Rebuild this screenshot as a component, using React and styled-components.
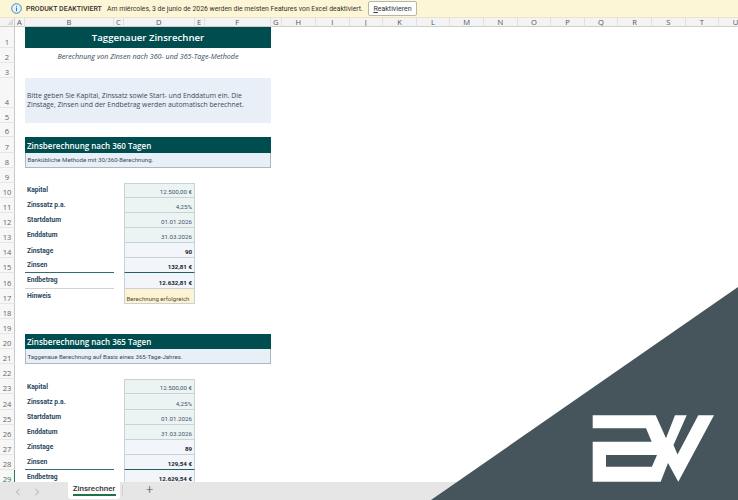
import React from "react";
import styled, { createGlobalStyle } from "styled-components";

const Global = createGlobalStyle`
  html, body { margin: 0; padding: 0; background: #fff; }
  body { font-family: Roboto, "Noto Sans", sans-serif; }
`;

const Window = styled.div`
  position: relative;
  width: 738px;
  height: 500px;
  display: flex;
  flex-direction: column;
  overflow: hidden;
  background: #fff;
`;

const InfoBar = styled.div`
  flex: none;
  height: 18px;
  box-sizing: border-box;
  padding-left: 11px;
  display: flex;
  align-items: center;
  background: #fdf6d6;
  border-bottom: 1px solid #e9e5cf;
  color: #33332f;
  white-space: nowrap;
`;
const InfoIcon = styled.svg`
  width: 11px;
  height: 11px;
  margin-right: 4px;
  flex: none;
`;
const InfoTitle = styled.span`
  flex: none;
  width: 81px;
  font-weight: 500;
  font-size: 7px;
`;
const InfoMessage = styled.span`
  flex: none;
  width: 255px;
  font-size: 6.85px;
`;
const ReactivateButton = styled.button`
  flex: none;
  margin-left: 6px;
  width: 49px;
  height: 15px;
  padding: 0;
  background: #fff;
  border: 1px solid #b9b7a8;
  border-radius: 2px;
  color: #33332f;
  font: 400 7px Roboto, sans-serif;
  u { text-underline-offset: 1px; }
`;

const Sheet = styled.div`
  flex: 1;
  min-height: 0;
  overflow: hidden;
  display: grid;
  grid-template-columns: 15px 10px 89px 10px 70.5px 10px 66.5px 10.5px 34.5px repeat(13, 33.6px) 20px;
  grid-template-rows: 9px 21.3px 15px 14.6px 30px 15px 14.6px repeat(11, 15.12px) 15.1px 15.1px 15.2px 15.1px 15.1px repeat(7, 15.15px);
  align-content: start;
  font-family: "Open Sans", "Noto Sans", sans-serif;
`;

const Corner = styled.div`
  grid-column: 1;
  grid-row: 1;
  position: relative;
  background: #f3f3f3;
  border-right: 1px solid #cfcfcf;
  border-bottom: 1px solid #cfcfcf;
  &::after {
    content: "";
    position: absolute;
    right: 1px;
    bottom: 1px;
    border-left: 6px solid transparent;
    border-bottom: 6px solid #dadada;
  }
`;
const ColHead = styled.div`
  grid-row: 1;
  background: #f3f3f3;
  border-right: 1px solid #e0e0e0;
  border-bottom: 1px solid #cfcfcf;
  color: #555;
  font-size: 7.6px;
  line-height: 8px;
  text-align: center;
  box-sizing: border-box;
  overflow: hidden;
`;
const RowHead = styled.div`
  grid-column: 1;
  background: #f7f7f7;
  border-right: 1px solid ${(p) => (p.$active ? "#2e7d52" : "#c9c9c9")};
  border-bottom: 1px solid #e6e6e6;
  color: ${(p) => (p.$active ? "#2e7d52" : "#666")};
  font-size: 7.6px;
  line-height: 9px;
  display: flex;
  align-items: flex-end;
  justify-content: center;
  box-sizing: border-box;
`;

const Title = styled.div`
  grid-column: 3 / 8;
  background: #004d50;
  color: #fff;
  font-size: 9.6px;
  font-weight: 600;
  display: flex;
  align-items: center;
  justify-content: center;
`;
const Subtitle = styled.div`
  grid-column: 3 / 8;
  color: #34495a;
  font-size: 7.14px;
  font-style: italic;
  display: flex;
  align-items: center;
  justify-content: center;
  white-space: nowrap;
`;
const Intro = styled.div`
  grid-column: 3 / 8;
  background: #e9eff6;
  color: #3b4b58;
  font-size: 6.85px;
  line-height: 9px;
  padding-left: 2px;
  display: flex;
  align-items: center;
  white-space: nowrap;
`;
const SectionHead = styled.div`
  grid-column: 3 / 8;
  background: #004d50;
  color: #fff;
  font-size: 8px;
  font-weight: 600;
  padding-left: 2px;
  display: flex;
  align-items: center;
  white-space: nowrap;
`;
const SectionNote = styled.div`
  grid-column: 3 / 8;
  background: #e9eff6;
  border: 1px solid #a9b9c4;
  border-top: none;
  box-sizing: border-box;
  color: #3a4c5c;
  font-family: Roboto, sans-serif;
  font-size: 6.1px;
  padding-left: 1.5px;
  display: flex;
  align-items: center;
  white-space: nowrap;
`;
const Label = styled.div`
  grid-column: 3;
  color: #2a4660;
  font-family: Roboto, sans-serif;
  font-size: 6.7px;
  font-weight: 700;
  padding: 0 0 0.5px 2px;
  display: flex;
  align-items: center;
  white-space: nowrap;
  box-sizing: border-box;
  border-bottom: ${(p) => (p.$rule === "thick" ? "1.5px solid #2f6d73" : p.$rule === "thin" ? "1px solid #cfd3d6" : "none")};
`;
const Value = styled.div`
  grid-column: 5;
  box-sizing: border-box;
  background: ${(p) => (p.$kind === "input" ? "#ecf3f3" : p.$kind === "note" ? "#fdf2d2" : "#f2f6fa")};
  border-left: 1px solid #c6d4d8;
  border-right: 1px solid #c6d4d8;
  border-top: ${(p) => (p.$first ? "1px solid #c6d4d8" : "none")};
  border-bottom: ${(p) => (p.$rule ? "1.5px solid #245e66" : "1px solid #c6d4d8")};
  color: ${(p) => (p.$kind === "input" ? "#42566a" : p.$kind === "note" ? "#544f33" : "#17212b")};
  font-family: Roboto, sans-serif;
  font-size: ${(p) => (p.$kind === "note" ? "6.1px" : "6.2px")};
  font-weight: ${(p) => (p.$kind === "calc" ? 700 : 400)};
  line-height: 9px;
  display: flex;
  align-items: flex-end;
  justify-content: ${(p) => (p.$kind === "note" ? "flex-start" : "flex-end")};
  padding: 0 1.5px 0;
  white-space: nowrap;
`;

const TabBar = styled.div`
  flex: none;
  height: 18.5px;
  display: flex;
  align-items: flex-start;
  background: #e6e6e6;
  color: #333;
`;
const Chevron = styled.svg`
  flex: none;
  width: 6px;
  height: 8px;
  margin-top: 6px;
  margin-left: ${(p) => p.$left}px;
`;
const Tab = styled.div`
  flex: none;
  width: 52px;
  height: 17px;
  margin-left: 28px;
  padding-top: 1.5px;
  background: #fff;
  border-radius: 0 0 3px 3px;
  display: flex;
  flex-direction: column;
  align-items: center;
  font-size: 8px;
  font-weight: 500;
  font-family: Roboto, sans-serif;
  line-height: 11px;
  box-sizing: border-box;
`;
const TabLine = styled.span`
  display: block;
  width: 43px;
  height: 1.5px;
  background: #217346;
`;
const TabDivider = styled.div`
  flex: none;
  width: 1px;
  height: 11px;
  margin: 3px 0 0 2px;
  background: #d0d0d0;
`;
const AddTab = styled.div`
  flex: none;
  margin-left: 23px;
  font-size: 13px;
  line-height: 16px;
  color: #555;
  font-weight: 300;
`;

const Banner = styled.svg`
  position: absolute;
  right: 0;
  bottom: 0;
  width: 307px;
  height: 213px;
`;

const columns = [
  ["A", 2], ["B", 3], ["C", 4], ["D", 5], ["E", 6], ["F", 7], ["G", 8], ["H", 9],
  ...["I", "J", "K", "L", "M", "N", "O", "P", "Q", "R", "S", "T"].map((c, i) => [c, 10 + i]),
  ["U", 22],
];

const rowNumbers = Array.from({ length: 29 }, (_, i) => i + 1);

const block = (first, zinstage, zinsen, endbetrag) => {
  const r = (n) => ({ gridRow: first + n + 1 });
  return [
    { label: "Kapital", value: "12.500,00 €", kind: "input", row: r(0), first: true },
    { label: "Zinssatz p.a.", value: "4,25%", kind: "input", row: r(1) },
    { label: "Startdatum", value: "01.01.2026", kind: "input", row: r(2) },
    { label: "Enddatum", value: "31.03.2026", kind: "input", row: r(3) },
    { label: "Zinstage", value: zinstage, kind: "calc", row: r(4) },
    { label: "Zinsen", value: zinsen, kind: "calc", row: r(5), rule: "thick" },
    { label: "Endbetrag", value: endbetrag, kind: "calc", row: r(6), rule: "thin" },
  ];
};

const rowsA = [
  ...block(10, "90", "132,81 €", "12.632,81 €"),
  { label: "Hinweis", value: "Berechnung erfolgreich", kind: "note", row: { gridRow: 18 } },
];
const rowsB = block(23, "89", "129,54 €", "12.629,54 €");

const Block = ({ rows }) =>
  rows.map((r) => (
    <React.Fragment key={r.label + r.row.gridRow}>
      <Label style={r.row} $rule={r.rule}>{r.label}</Label>
      <Value style={r.row} $kind={r.kind} $first={r.first} $rule={r.rule === "thick"}>{r.value}</Value>
    </React.Fragment>
  ));

const LOGO =
  "M592.7 415.3 L655.7 415.3 L666 438.3 L675 415.3 L686.7 415.3 L673.5 445 L677.5 454.5 L698.3 415.3 L714 415.3 L678.3 481.7 L668 463 L660.7 481.7 L592.7 481.7 L592.7 441.7 L651.7 441.7 L646 428.3 L592.7 428.3 Z M606 455 L657 455 L651.9 466.7 L606 466.7 Z";

export default function App() {
  return (
    <Window>
      <Global />
      <InfoBar>
        <InfoIcon viewBox="0 0 11 11">
          <circle cx="5.5" cy="5.5" r="4.8" fill="#e8f1f8" stroke="#2f7fb8" strokeWidth="0.9" />
          <rect x="5" y="4.6" width="1" height="3.6" fill="#2f7fb8" />
          <rect x="5" y="2.8" width="1" height="1" fill="#2f7fb8" />
        </InfoIcon>
        <InfoTitle>PRODUKT DEAKTIVIERT</InfoTitle>
        <InfoMessage>Am miércoles, 3 de junio de 2026 werden die meisten Features von Excel deaktiviert.</InfoMessage>
        <ReactivateButton><u>R</u>eaktivieren</ReactivateButton>
      </InfoBar>
      <Sheet>
        <Corner />
        {columns.map(([c, col]) => (
          <ColHead key={c} style={{ gridColumn: col }}>{c}</ColHead>
        ))}
        {rowNumbers.map((n) => (
          <RowHead key={n} style={{ gridRow: n + 1 }} $active={n === 29}>{n}</RowHead>
        ))}
        <Title style={{ gridRow: 2 }}>Taggenauer Zinsrechner</Title>
        <Subtitle style={{ gridRow: 3 }}>Berechnung von Zinsen nach 360- und 365-Tage-Methode</Subtitle>
        <Intro style={{ gridRow: "5 / 7" }}>
          <span>
            Bitte geben Sie Kapital, Zinssatz sowie Start- und Enddatum ein. Die
            <br />
            Zinstage, Zinsen und der Endbetrag werden automatisch berechnet.
          </span>
        </Intro>
        <SectionHead style={{ gridRow: 8 }}>Zinsberechnung nach 360 Tagen</SectionHead>
        <SectionNote style={{ gridRow: 9 }}>Bankübliche Methode mit 30/360-Berechnung.</SectionNote>
        <Block rows={rowsA} />
        <SectionHead style={{ gridRow: 21 }}>Zinsberechnung nach 365 Tagen</SectionHead>
        <SectionNote style={{ gridRow: 22 }}>Taggenaue Berechnung auf Basis eines 365-Tage-Jahres.</SectionNote>
        <Block rows={rowsB} />
      </Sheet>
      <TabBar>
        <Chevron viewBox="0 0 6 8" $left={15}>
          <path d="M4.5 0.8 L1.5 4 L4.5 7.2" fill="none" stroke="#a6a6a6" strokeWidth="0.9" />
        </Chevron>
        <Chevron viewBox="0 0 6 8" $left={13}>
          <path d="M1.5 0.8 L4.5 4 L1.5 7.2" fill="none" stroke="#a6a6a6" strokeWidth="0.9" />
        </Chevron>
        <Tab>
          Zinsrechner
          <TabLine />
        </Tab>
        <TabDivider />
        <AddTab>+</AddTab>
      </TabBar>
      <Banner viewBox="431 287 307 213">
        <polygon points="738,287 738,500 431,500" fill="#45555b" />
        <path d={LOGO} fill="#fff" fillRule="evenodd" />
      </Banner>
    </Window>
  );
}
